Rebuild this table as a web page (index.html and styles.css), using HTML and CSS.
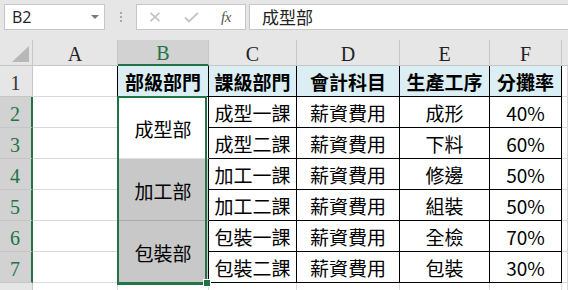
FILE: index.html
```html
<!DOCTYPE html>
<html lang="zh-Hant">
<head>
<meta charset="utf-8">
<title>Sheet</title>
<link rel="stylesheet" href="styles.css">
</head>
<body>
<div class="app">
  <div class="toolbar">
    <div class="namebox"><span class="namebox-text">B2</span><span class="caret"></span></div>
    <div class="grip"><span></span><span></span><span></span></div>
    <div class="fxgroup">
      <svg class="ico-x" width="12" height="10" viewBox="0 0 12 10"><path d="M1.5 0.8 L10.5 9.2 M10.5 0.8 L1.5 9.2" stroke="#c3c3c3" stroke-width="1.6" fill="none"/></svg>
      <svg class="ico-check" width="15" height="11" viewBox="0 0 15 11"><path d="M1 5.5 L5 9.5 L14 0.8" stroke="#c3c3c3" stroke-width="1.8" fill="none"/></svg>
      <span class="fx">fx</span>
    </div>
    <div class="formula">成型部</div>
  </div>

  <div class="sheet">
    <div class="corner"><span class="tri"></span></div>
    <div class="colhdr">A</div>
    <div class="colhdr sel">B</div>
    <div class="colhdr">C</div>
    <div class="colhdr">D</div>
    <div class="colhdr">E</div>
    <div class="colhdr">F</div>
    <div class="colhdr last"></div>

    <div class="rowhdr">1</div>
    <div class="cell bl"></div>
    <div class="cell b head">部級部門</div>
    <div class="cell b head">課級部門</div>
    <div class="cell b head">會計科目</div>
    <div class="cell b head">生產工序</div>
    <div class="cell b head">分攤率</div>
    <div class="cell"></div>

    <div class="rowhdr sel">2</div>
    <div class="cell"></div>
    <div class="cell merge m1">成型部</div>
    <div class="cell b">成型一課</div>
    <div class="cell b">薪資費用</div>
    <div class="cell b">成形</div>
    <div class="cell b">40%</div>
    <div class="cell"></div>

    <div class="rowhdr sel">3</div>
    <div class="cell"></div>
    <div class="cell b">成型二課</div>
    <div class="cell b">薪資費用</div>
    <div class="cell b">下料</div>
    <div class="cell b">60%</div>
    <div class="cell"></div>

    <div class="rowhdr sel">4</div>
    <div class="cell"></div>
    <div class="cell merge m2">加工部</div>
    <div class="cell b">加工一課</div>
    <div class="cell b">薪資費用</div>
    <div class="cell b">修邊</div>
    <div class="cell b">50%</div>
    <div class="cell"></div>

    <div class="rowhdr sel">5</div>
    <div class="cell"></div>
    <div class="cell b">加工二課</div>
    <div class="cell b">薪資費用</div>
    <div class="cell b">組裝</div>
    <div class="cell b">50%</div>
    <div class="cell"></div>

    <div class="rowhdr sel">6</div>
    <div class="cell"></div>
    <div class="cell merge m3">包裝部</div>
    <div class="cell b">包裝一課</div>
    <div class="cell b">薪資費用</div>
    <div class="cell b">全檢</div>
    <div class="cell b">70%</div>
    <div class="cell"></div>

    <div class="rowhdr sel">7</div>
    <div class="cell"></div>
    <div class="cell b">包裝二課</div>
    <div class="cell b">薪資費用</div>
    <div class="cell b">包裝</div>
    <div class="cell b">30%</div>
    <div class="cell"></div>

    <div class="rowhdr"></div>
    <div class="cell"></div>
    <div class="cell"></div>
    <div class="cell"></div>
    <div class="cell"></div>
    <div class="cell"></div>
    <div class="cell"></div>
    <div class="cell"></div>

    <div class="selection"></div>
    <div class="handle"></div>
  </div>
</div>
</body>
</html>
```

FILE: styles.css
```css
* { box-sizing: border-box; }
html, body { margin: 0; padding: 0; }
body {
  width: 568px;
  height: 290px;
  overflow: hidden;
  background: #e6e6e6;
  font-family: "Noto Sans CJK TC", "Noto Sans", sans-serif;
  color: #000;
}
.app { width: 568px; height: 290px; overflow: hidden; }

.toolbar {
  height: 40px;
  display: flex;
  align-items: flex-start;
  padding-top: 4px;
  padding-left: 4px;
}
.namebox {
  width: 101px;
  height: 26px;
  background: #fff;
  border: 1px solid #c6c6c6;
  display: flex;
  align-items: center;
  justify-content: space-between;
  padding: 0 5px 0 7px;
}
.namebox-text {
  font-family: "Open Sans", "Noto Sans", sans-serif;
  font-size: 16px;
  color: #222;
  line-height: 1;
}
.caret {
  width: 0; height: 0;
  border-left: 4.5px solid transparent;
  border-right: 4.5px solid transparent;
  border-top: 4px solid #7a7a7a;
}
.grip {
  width: 31px;
  height: 26px;
  display: flex;
  flex-direction: column;
  align-items: center;
  justify-content: center;
  gap: 2px;
}
.grip span { width: 2px; height: 2px; background: #a8a8a8; display: block; }
.fxgroup {
  width: 110px;
  height: 26px;
  background: #fff;
  border: 1px solid #c6c6c6;
  display: flex;
  align-items: center;
  padding-left: 12px;
}
.ico-x { margin-right: 23px; }
.ico-check { margin-right: 22px; }
.fx {
  font-family: "Liberation Serif", serif;
  font-style: italic;
  font-size: 15px;
  color: #555;
  letter-spacing: -0.5px;
}
.formula {
  flex: 1;
  margin-left: 3px;
  height: 26px;
  background: #fff;
  border: 1px solid #c6c6c6;
  border-right: none;
  padding-left: 12px;
  font-size: 17px;
  line-height: 24px;
  color: #222;
}

.sheet {
  position: relative;
  display: grid;
  grid-template-columns: 33px 85px 91px 88px 103px 90px 72px 1fr;
  grid-template-rows: 26px repeat(7, 31px) 40px;
  background: #fff;
  height: 250px;
}
.corner {
  background: #e6e6e6;
  border-right: 1px solid #c6c6c6;
  border-bottom: 1px solid #c6c6c6;
  position: relative;
}
.tri {
  position: absolute;
  right: 3px;
  bottom: 3px;
  width: 0; height: 0;
  border-left: 17px solid transparent;
  border-bottom: 16px solid #b8b8b8;
}
.colhdr {
  background: #e6e6e6;
  border-right: 1px solid #c6c6c6;
  border-bottom: 1px solid #c6c6c6;
  font-family: "Liberation Serif", serif;
  font-size: 20px;
  color: #222;
  display: flex;
  justify-content: center;
  align-items: center;
  padding-top: 3px;
}
.colhdr.sel {
  background: #d2d2d2;
  color: #217346;
  border-bottom: 2px solid #217346;
}
.colhdr.last { border-right: none; }
.rowhdr {
  background: #e6e6e6;
  border-right: 1px solid #c6c6c6;
  border-bottom: 1px solid #c6c6c6;
  font-family: "Liberation Serif", serif;
  font-size: 20px;
  color: #333;
  display: flex;
  justify-content: center;
  align-items: flex-end;
  padding-bottom: 1px;
  padding-right: 1px;
}
.rowhdr.sel {
  background: #d2d2d2;
  color: #217346;
  border-right: 2px solid #217346;
}

.cell {
  border-right: 1px solid #d9d9d9;
  border-bottom: 1px solid #d9d9d9;
  font-size: 19px;
  display: flex;
  align-items: center;
  justify-content: center;
  white-space: nowrap;
  padding-top: 1px;
}
.cell.bl { border-right-color: #000; }
.cell.b { border-right-color: #000; border-bottom-color: #000; }
.cell.head { background: #daeef3; font-weight: bold; }
.merge { grid-row: span 2; border-right-color: #000; }
.m1 { background: #fff; border-bottom-color: #e0e0e0; }
.m2 { background: #c8c8c8; border-bottom-color: #a8a8a8; }
.m3 { background: #c8c8c8; border-bottom-color: #217346; }

.selection {
  position: absolute;
  left: 117px;
  top: 56px;
  width: 90px;
  height: 189px;
  border: 2px solid #217346;
  pointer-events: none;
}
.handle {
  position: absolute;
  left: 204px;
  top: 240px;
  width: 6px;
  height: 6px;
  background: #217346;
  box-shadow: 0 0 0 1px #fff;
}
```
